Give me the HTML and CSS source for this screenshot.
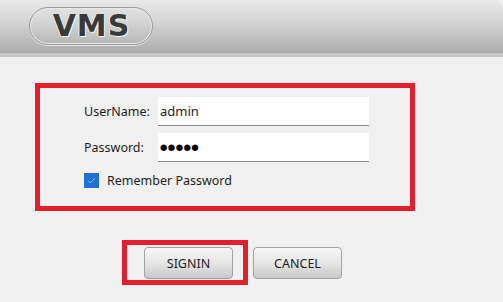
FILE: index.html
```html
<!DOCTYPE html>
<html>
<head>
<meta charset="utf-8">
<link rel="stylesheet" href="styles.css">
</head>
<body>
<div class="window">
  <header class="header">
    <div class="logo"><span class="logo-text">VMS</span></div>
  </header>
  <main class="main">
    <form class="form">
      <div class="grid">
        <label class="label">UserName:</label>
        <div class="input">admin</div>
        <label class="label">Password:</label>
        <div class="input dots">●●●●●</div>
      </div>
      <div class="remember">
        <span class="check">
          <svg width="15" height="15" viewBox="0 0 15 15"><path d="M4 7.6 L6.4 10 L11 5" fill="none" stroke="#8fb8ef" stroke-width="1"/></svg>
        </span>
        <span class="remember-text">Remember Password</span>
      </div>
    </form>
    <div class="buttons">
      <div class="highlight"><button class="btn" type="button">SIGNIN</button></div>
      <button class="btn" type="button">CANCEL</button>
    </div>
  </main>
</div>
</body>
</html>
```

FILE: styles.css
```css
html, body {
  margin: 0;
  padding: 0;
}
body {
  width: 503px;
  height: 302px;
  background: #f0f0f0;
  font-family: "Noto Sans", "Liberation Sans", sans-serif;
  color: #1e1e1e;
  overflow: hidden;
}
.window {
  width: 503px;
  height: 302px;
}
.header {
  background: linear-gradient(to bottom, #e9e9e9 0%, #d2d2d2 45%, #ababab 100%);
  border-bottom: 4px solid #c6c6c6;
  border-top-right-radius: 10px;
  padding: 7px 0 0 29px;
  box-sizing: content-box;
  height: 46px;
}
.logo {
  width: 122px;
  height: 36px;
  border: 1px solid #9c9c9c;
  border-radius: 19px;
  box-shadow: inset 0 0 0 1px #e8e8e8, 0 1px 0 #e4e4e4;
  display: flex;
  align-items: center;
  justify-content: center;
}
.logo-text {
  font-family: "DejaVu Sans", "Liberation Sans", sans-serif;
  font-weight: bold;
  font-size: 30px;
  letter-spacing: 1px;
  margin-left: 1px;
  color: #3a3a3a;
  text-shadow: 1px 1px 0 #f4f4f4, -1px 0 0 #f0f0f0;
  line-height: 1;
}
.main {
  padding: 26px 0 0 35px;
}
.form {
  margin: 0;
  width: 380px;
  height: 128px;
  box-sizing: border-box;
  border: 5px solid #e41f2b;
  padding: 9px 0 0 44px;
}
.grid {
  display: grid;
  grid-template-columns: 74px 211px;
  grid-auto-rows: 29px;
  row-gap: 7px;
  align-items: center;
}
.label {
  font-size: 12.5px;
}
.input {
  height: 29px;
  box-sizing: border-box;
  background: #fff;
  border-bottom: 1px solid #8a8a8a;
  padding-left: 2px;
  font-size: 13px;
  line-height: 28px;
}
.dots {
  font-family: "DejaVu Sans", sans-serif;
  font-size: 8.5px;
  letter-spacing: 0.4px;
  color: #000;
}
.remember {
  display: flex;
  align-items: center;
  margin-top: 11px;
  height: 15px;
}
.check {
  width: 15px;
  height: 15px;
  background: #1f6fd8;
  display: block;
  margin-right: 8px;
}
.check svg {
  display: block;
}
.remember-text {
  font-size: 12.5px;
}
.buttons {
  display: flex;
  align-items: flex-start;
  margin: 29px 0 0 87px;
  gap: 5px;
}
.highlight {
  border: 5px solid #e41f2b;
  padding: 2px 10px 1px 17px;
}
.btn {
  width: 89px;
  height: 32px;
  border: 1px solid #a2a2a2;
  border-radius: 4px;
  background: linear-gradient(to bottom, #f7f7f7 0%, #e6e6e6 50%, #c9c9c9 100%);
  font-family: "Noto Sans", "Liberation Sans", sans-serif;
  font-size: 12.5px;
  color: #1e1e1e;
  padding: 0;
  margin: 0;
}
.buttons > .btn {
  margin-top: 7px;
}
```
